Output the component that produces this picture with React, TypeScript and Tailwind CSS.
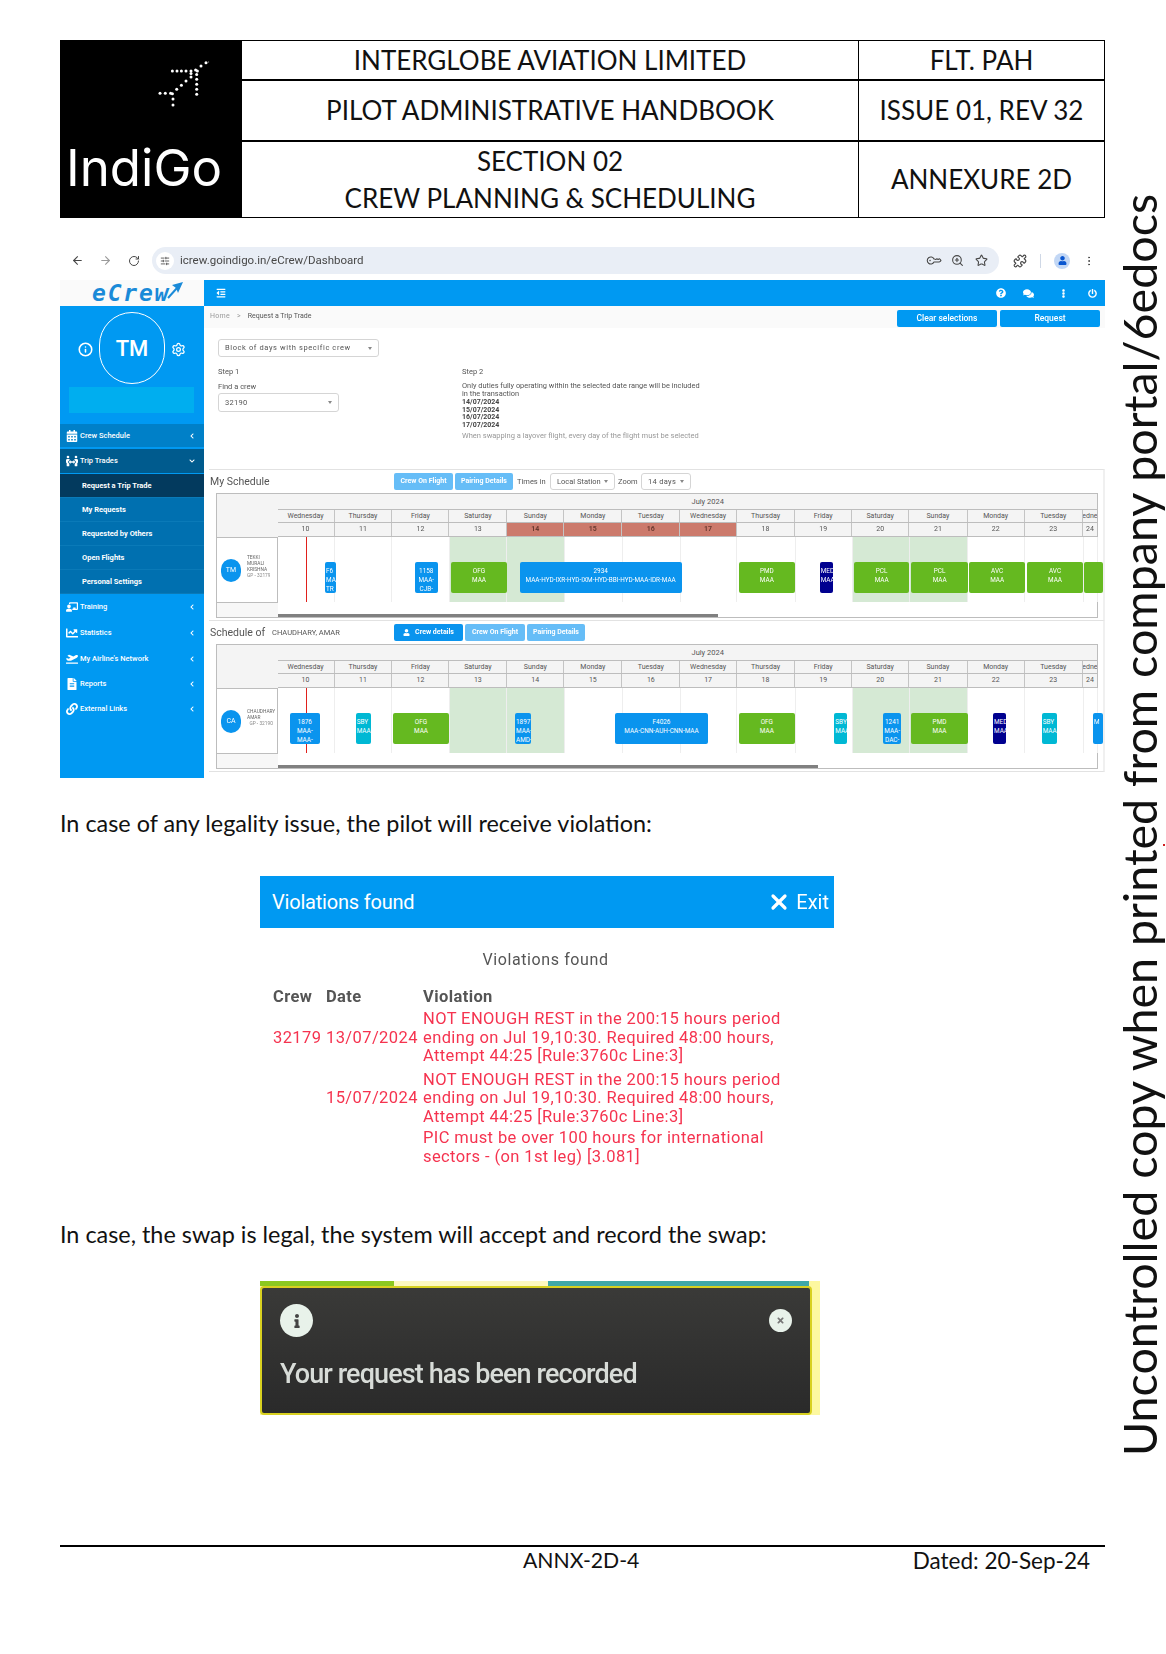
import React from "react";
import { ArrowLeft, ArrowRight, RotateCw, KeyRound, ZoomIn, Star, Puzzle, MoreVertical, Info, Settings, X, SlidersHorizontal } from "lucide-react";
import { FaCalendarAlt, FaPeopleArrows, FaChalkboardTeacher, FaChartLine, FaPlaneDeparture, FaFileAlt, FaLink, FaQuestionCircle, FaComments, FaPowerOff, FaOutdent, FaUser, FaChevronLeft, FaChevronDown, FaEllipsisV, FaInfo, FaTimes } from "react-icons/fa";

const planeDots = [
  [171.4,70],[176,70],[180.4,70],[185,70],[190,70],[196.4,70],
  [205,61.7],[200,65],[194.6,69],[190,72.5],[190,76],[185,80],[180.4,84.3],[175.7,88.3],[171.4,92.7],
  [159,92.3],[164.3,92.3],[169.6,92.3],[172,98],[172,104],
  [195.7,73.5],[195.7,78.3],[195.7,83.3],[195.7,88.3],[195.7,93.3],
];

function Logo() {
  return (
    <div className="bg-black h-full flex flex-col items-start">
      <svg width="180" height="104" viewBox="60 40 180 104" className="block">
        {planeDots.map(([x, y], i) => <circle key={i} cx={x} cy={y} r={1.5} fill="#fff" />)}
        <circle cx="207.5" cy="61" r="0.7" fill="#777" />
      </svg>
      <div className="ml-[5px] mt-[-2px] text-white font-[Inter,sans-serif] font-normal text-[51px] leading-[50px] tracking-[0px]">IndiGo</div>
    </div>
  );
}

function Header() {
  return (
    <div className="grid grid-cols-[180px_617px_1fr] grid-rows-[40px_61px_1fr] h-[178px] border border-black font-[Lato,sans-serif] text-[26px] text-[#111]">
      <div className="row-span-3"><Logo /></div>
      <div className="border-l border-b-2 border-black flex items-center justify-center">INTERGLOBE AVIATION LIMITED</div>
      <div className="border-l border-b-2 border-black flex items-center justify-center">FLT. PAH</div>
      <div className="border-l border-b-2 border-black flex items-center justify-center">PILOT ADMINISTRATIVE HANDBOOK</div>
      <div className="border-l border-b-2 border-black flex items-center justify-center">ISSUE 01, REV 32</div>
      <div className="border-l border-black flex flex-col items-center justify-center leading-[37px]"><span>SECTION 02</span><span>CREW PLANNING &amp; SCHEDULING</span></div>
      <div className="border-l border-black flex items-center justify-center">ANNEXURE 2D</div>
    </div>
  );
}

function BrowserBar() {
  return (
    <div className="h-[27px] flex items-center text-[#474747] font-[Roboto,sans-serif] blur-[0.3px]">
      <ArrowLeft size={13} className="ml-[11px]" />
      <ArrowRight size={13} className="ml-[15px] text-[#9a9a9a]" />
      <RotateCw size={12} className="ml-[16px]" />
      <div className="ml-[12px] w-[847px] h-[27px] rounded-full bg-[#e9eef6] flex items-center">
        <div className="ml-[4px] w-[18px] h-[18px] rounded-full bg-white flex items-center justify-center"><SlidersHorizontal size={10} /></div>
        <span className="ml-[6px] text-[11.5px]">icrew.goindigo.in/eCrew/Dashboard</span>
        <div className="ml-auto flex items-center gap-[11px] mr-[11px]">
          <KeyRound size={13} className="rotate-[225deg]" /><ZoomIn size={13} /><Star size={13} />
        </div>
      </div>
      <Puzzle size={14} className="ml-[14px]" />
      <div className="ml-[13px] w-px h-[14px] bg-[#cfd8e6]" />
      <div className="ml-[13px] w-[16px] h-[16px] rounded-full bg-[#c2d7f5] flex items-center justify-center text-[#0b57d0]"><FaUser size={9} /></div>
      <MoreVertical size={12} className="ml-[13px]" />
    </div>
  );
}

function NavRow({ icon, label, open, cls }: { icon: React.ReactNode; label: string; open?: boolean; cls: string }) {
  return (
    <div className={"flex items-center pl-[5px] pr-[9px] text-white font-medium text-[7.5px] " + cls}>
      <span className="w-[14px] mr-px flex justify-center text-[12px]">{icon}</span>
      <span className="flex-1">{label}</span>
      {open ? <FaChevronDown size={6} /> : <FaChevronLeft size={6} />}
    </div>
  );
}

function SubRow({ label, dark }: { label: string; dark?: boolean }) {
  return <div className={"h-[24px] flex items-center pl-[22px] text-white font-bold text-[7.5px] border-b border-[#0a7ab8] " + (dark ? "bg-[#033a5e]" : "bg-[#0070b0]")}>{label}</div>;
}

function Sidebar() {
  return (
    <div className="w-[144px] flex flex-col shrink-0">
      <div className="h-[26px] bg-[#fafafa] flex items-end pl-[32px]">
        <span className="font-['DejaVu_Sans_Mono',monospace] italic font-bold text-[23px] leading-[26px] text-[#1a8ad8] tracking-[1.8px]">eCrew</span>
        <svg width="18" height="18" viewBox="0 0 18 18" className="ml-[-4px] mb-[7px]">
          <path d="M2 17 L11 7" stroke="#1a8ad8" strokeWidth="2" fill="none" />
          <polygon points="17,1 6,4 10,7 12,12" fill="#1a8ad8" />
        </svg>
      </div>
      <div className="flex-1 bg-[#0099f2] flex flex-col">
        <div className="h-[118px] flex flex-col">
          <div className="flex items-center mt-[6px] h-[72px]">
            <Info size={15} className="text-white ml-[18px] mt-[3px]" strokeWidth={2.5} />
            <div className="ml-[6px] w-[66px] h-[72px] rounded-full border border-white text-white text-[22px] font-medium flex items-center justify-center">TM</div>
            <Settings size={15} className="text-white ml-[6px] mt-[3px]" />
          </div>
          <div className="ml-[9px] mt-[3px] w-[125px] h-[26px] bg-[#00aeef]" />
        </div>
        <NavRow cls="h-[23px] bg-[#0080c8] mb-[2px]" icon={<FaCalendarAlt />} label="Crew Schedule" />
        <NavRow cls="h-[24px] bg-[#005b8e] mb-px" icon={<FaPeopleArrows />} label="Trip Trades" open />
        <SubRow dark label="Request a Trip Trade" />
        <SubRow label="My Requests" />
        <SubRow label="Requested by Others" />
        <SubRow label="Open Flights" />
        <SubRow label="Personal Settings" />
        <NavRow cls="h-[26px]" icon={<FaChalkboardTeacher />} label="Training" />
        <NavRow cls="h-[26px]" icon={<FaChartLine />} label="Statistics" />
        <NavRow cls="h-[25px]" icon={<FaPlaneDeparture />} label="My Airline's Network" />
        <NavRow cls="h-[25px]" icon={<FaFileAlt />} label="Reports" />
        <NavRow cls="h-[26px]" icon={<FaLink />} label="External Links" />
      </div>
    </div>
  );
}

const Caret = () => <span className="ml-auto shrink-0 w-0 h-0 border-x-[2px] border-x-transparent border-t-[3px] border-t-[#888]" />;

function Select({ label, cls }: { label: string; cls: string }) {
  return <div className={"flex items-center whitespace-nowrap border border-[#d5d5d5] rounded-[3px] text-[#555] text-[7.5px] px-[6px] bg-white " + cls}><span>{label}</span><Caret /></div>;
}

const edges = [277.5, 334.6, 392.5, 449.6, 507.5, 564.6, 622.7, 680.7, 737.3, 795.7, 852.7, 909.7, 968.3, 1025.3, 1083.7, 1097.7];
const dayNames = ["Wednesday","Thursday","Friday","Saturday","Sunday","Monday","Tuesday","Wednesday","Thursday","Friday","Saturday","Sunday","Monday","Tuesday","edne"];
const BLUE = "bg-[#0a94ee]";
const GREEN = "bg-[#65b920]";
const NAVY = "bg-[#00008f]";
const TEAL = "bg-[#00b8d4]";

type Block = { a: number; b: number; c: string; t: string[]; left?: boolean };

function Table({ red, avatar, name, gp, blocks, thumb }: { red: boolean; avatar: string; name: string[]; gp: string; blocks: Block[]; thumb: number }) {
  return (
    <div className="ml-[7px] w-[882px] flex text-[#555]">
      <div className="w-[61.5px] shrink-0 flex flex-col border-l border-[#bdbdbd]">
        <div className="h-[44px] bg-[#f4f4f4] border-t border-[#bdbdbd]" />
        <div className="h-[65px] border-t border-r border-[#bdbdbd] bg-white flex items-center">
          <div className="ml-[4px] w-[20px] h-[23px] rounded-full bg-[#0a94ee] text-white text-[7px] flex items-center justify-center shrink-0">{avatar}</div>
          <div className="ml-[6px] text-[4.8px] leading-[6px] whitespace-nowrap overflow-hidden text-[#666] mt-[-6px]">
            {name.map((n) => <div key={n}>{n}</div>)}
            <div className="text-center text-[#888]">{gp}</div>
          </div>
        </div>
        <div className="h-[16px] bg-[#f7f7f7] border-y border-[#bdbdbd]" />
      </div>
      <div className="flex-1 flex flex-col min-w-0">
        <div className="h-[17px] bg-[#f4f4f4] border-y border-r border-[#bdbdbd] flex items-center text-[7.5px] pl-[414px]">July 2024</div>
        <div className="h-[13px] bg-[#f4f4f4] border-b border-r border-[#bdbdbd] flex">
          {dayNames.map((d, i) => (
            <div key={i} className="border-r border-[#c4c4c4] last:border-r-0 flex items-center justify-center overflow-hidden text-[7px] whitespace-nowrap" style={{ width: edges[i + 1] - edges[i] }}>{d}</div>
          ))}
        </div>
        <div className="h-[14px] bg-[#f4f4f4] border-b border-r border-[#bdbdbd] flex">
          {dayNames.map((_, i) => {
            const hot = red && i >= 4 && i <= 7;
            return <div key={i} className={"border-r border-[#c4c4c4] last:border-r-0 flex items-center justify-center text-[7px] " + (hot ? "bg-[#cc7a6c] font-bold text-[#6b3a30]" : "")} style={{ width: edges[i + 1] - edges[i] }}>{10 + i}</div>;
          })}
        </div>
        <div className="h-[65px] relative flex bg-white">
          {dayNames.map((_, i) => {
            const green = i === 3 || i === 4 || i === 10 || i === 11;
            return <div key={i} className={"border-r border-[#eeeeee] h-full " + (green ? "bg-[#d5e9d4]" : "")} style={{ width: edges[i + 1] - edges[i] }} />;
          })}
          <div className="absolute top-0 bottom-0 left-[28px] w-px bg-[#e0201c]" />
          {blocks.map((b, i) => (
            <div key={i} className={"absolute top-[24.5px] h-[31px] rounded-[2px] text-white text-[6.4px] leading-[9px] pt-[5px] overflow-hidden whitespace-nowrap " + (b.left ? "text-left pl-px " : "text-center ") + b.c} style={{ left: b.a - 277.5, width: b.b - b.a }}>
              {b.t.map((l, j) => <div key={j}>{l}</div>)}
            </div>
          ))}
        </div>
        <div className="h-[16px] flex flex-col justify-end border-b border-[#bdbdbd] border-r relative">
          <div className="h-[3px] bg-[#808080]" style={{ width: thumb - 277.5 }} />
        </div>
      </div>
    </div>
  );
}

const BlueBtn = ({ label, cls, icon }: { label: string; cls: string; icon?: React.ReactNode }) => (
  <div className={"h-[17px] rounded-[2px] flex items-center justify-center text-white font-bold text-[7px] " + cls}>{icon}{label}</div>
);

const blocks1: Block[] = [
  { a: 325, b: 335.7, c: BLUE, t: ["F6", "MA", "TR"], left: true },
  { a: 415, b: 437.5, c: BLUE, t: ["1158", "MAA-", "CJB-"] },
  { a: 451, b: 507, c: GREEN, t: ["OFG", "MAA"] },
  { a: 519.6, b: 681.7, c: BLUE, t: ["2934", "MAA-HYD-IXR-HYD-IXM-HYD-BBI-HYD-MAA-IDR-MAA"] },
  { a: 738.7, b: 795, c: GREEN, t: ["PMD", "MAA"] },
  { a: 819.7, b: 833.3, c: NAVY, t: ["MED", "MAA"], left: true },
  { a: 854, b: 909.3, c: GREEN, t: ["PCL", "MAA"] },
  { a: 911, b: 968.3, c: GREEN, t: ["PCL", "MAA"] },
  { a: 969, b: 1025.3, c: GREEN, t: ["AVC", "MAA"] },
  { a: 1027, b: 1083, c: GREEN, t: ["AVC", "MAA"] },
  { a: 1084, b: 1102.7, c: GREEN, t: [] },
];
const blocks2: Block[] = [
  { a: 289.6, b: 320, c: BLUE, t: ["1876", "MAA-", "MAA-"] },
  { a: 355.7, b: 370.7, c: TEAL, t: ["SBY", "MAA"], left: true },
  { a: 393, b: 449, c: GREEN, t: ["OFG", "MAA"] },
  { a: 515, b: 531, c: BLUE, t: ["1897", "MAA-", "AMD-"], left: true },
  { a: 614.7, b: 708.3, c: BLUE, t: ["F4026", "MAA-CNN-AUH-CNN-MAA"] },
  { a: 738.7, b: 795, c: GREEN, t: ["OFG", "MAA"] },
  { a: 834.3, b: 847.3, c: TEAL, t: ["SBY", "MAA"], left: true },
  { a: 883.3, b: 901, c: BLUE, t: ["1241", "MAA-", "DAC-"] },
  { a: 911, b: 968, c: GREEN, t: ["PMD", "MAA"] },
  { a: 993, b: 1006.3, c: NAVY, t: ["MED", "MAA"], left: true },
  { a: 1041.7, b: 1057.3, c: TEAL, t: ["SBY", "MAA"], left: true },
  { a: 1093, b: 1102.7, c: BLUE, t: ["", "M"], left: true },
];

function AppShot() {
  return (
    <div className="mt-[6px] h-[498px] flex font-[Roboto,sans-serif] blur-[0.3px]">
      <Sidebar />
      <div className="flex-1 flex flex-col min-w-0">
        <div className="h-[26px] bg-[#0099f2] flex items-center text-white text-[11px]">
          <FaOutdent size={10} className="ml-[12px]" />
          <FaQuestionCircle size={10} className="ml-auto" />
          <FaComments size={11} className="ml-[17px]" />
          <FaEllipsisV size={9} className="ml-[25px]" />
          <FaPowerOff size={9} className="ml-[20px] mr-[8px]" />
        </div>
        <div className="h-[22px] bg-[#fafafa] flex items-center text-[7px] text-[#555] pl-[6px]">
          <span className="text-[#999] tracking-[0.3px] mt-[-2px]">Home</span>
          <span className="mx-[7px] text-[#999] mt-[-2px]">&gt;</span>
          <span className="mt-[-2px]">Request a Trip Trade</span>
          <BlueBtn label="Clear selections" cls="ml-auto w-[100px] bg-[#0099f2] font-medium text-[8.5px] mt-[2px]" />
          <BlueBtn label="Request" cls="ml-[3px] mr-[5px] w-[100px] bg-[#0099f2] font-medium text-[8.5px] mt-[2px]" />
        </div>
        <div className="h-[141px] flex text-[#555] text-[7.5px]">
          <div className="w-[258px] pl-[14px] pt-[11px]">
            <Select label="Block of days with specific crew" cls="w-[161px] h-[18px] tracking-[0.6px]" />
            <div className="mt-[10px] leading-[10px]">Step 1</div>
            <div className="mt-[5px] leading-[10px]">Find a crew</div>
            <Select label="32190" cls="mt-[1px] w-[121px] h-[19px] tracking-[0.3px]" />
          </div>
          <div className="pt-[39px] flex-1">
            <div className="leading-[10px]">Step 2</div>
            <div className="mt-[5px] leading-[8px] w-[242px] text-[7.4px]">Only duties fully operating within the selected date range will be included in the transaction</div>
            <div className="mt-[1px] font-bold text-[7px] text-[#444] leading-[7.6px]"><div>14/07/2024</div><div>15/07/2024</div><div>16/07/2024</div><div>17/07/2024</div></div>
            <div className="mt-[2px] text-[#999] leading-[10px]">When swapping a layover flight, every day of the flight must be selected</div>
          </div>
        </div>
        <div className="ml-[5px] w-[896px] border-t border-r-2 border-t-[#e2e2e2] border-r-[#f0f0f0] h-[152px] flex flex-col border-b border-b-[#e2e2e2]">
          <div className="h-[23px] shrink-0 flex items-center text-[7.5px] text-[#555]">
            <span className="ml-[1px] w-[184px] text-[10.5px]">My Schedule</span>
            <BlueBtn label="Crew On Flight" cls="w-[59px] bg-[#66bdf7]" />
            <BlueBtn label="Pairing Details" cls="ml-[2px] w-[58px] bg-[#66bdf7]" />
            <span className="ml-[4px] w-[33px]">Times in</span>
            <Select label="Local Station" cls="w-[65px] h-[17px]" />
            <span className="ml-[3px] w-[23px]">Zoom</span>
            <Select label="14 days" cls="w-[50px] h-[17px] tracking-[0.3px]" />
          </div>
          <Table red avatar="TM" name={["TEKKI", "MURALI", "KRISHNA"]} gp="GP - 32179" blocks={blocks1} thumb={718.3} />
        </div>
        <div className="ml-[5px] w-[896px] h-[151px] flex flex-col border-r-2 border-r-[#f0f0f0] border-b border-b-[#e2e2e2]">
          <div className="h-[23px] shrink-0 flex items-center text-[7.5px] text-[#555]">
            <span className="ml-[1px] w-[62px] text-[10.5px]">Schedule of</span>
            <span className="w-[122px] text-[7.5px]">CHAUDHARY, AMAR</span>
            <BlueBtn label="Crew details" icon={<FaUser size={7} className="mr-[5px]" />} cls="w-[69px] bg-[#0a94ee]" />
            <BlueBtn label="Crew On Flight" cls="ml-[2px] w-[60px] bg-[#66bdf7]" />
            <BlueBtn label="Pairing Details" cls="ml-[2px] w-[58px] bg-[#66bdf7]" />
          </div>
          <Table red={false} avatar="CA" name={["CHAUDHARY", "AMAR"]} gp="GP - 32190" blocks={blocks2} thumb={817.7} />
        </div>
      </div>
    </div>
  );
}

function Violations() {
  const red = "text-[#f5334f]";
  const text = ["NOT ENOUGH REST in the 200:15 hours period", "ending on Jul 19,10:30. Required 48:00 hours,", "Attempt 44:25 [Rule:3760c Line:3]"];
  const Cell = ({ lines }: { lines: string[] }) => <div className="flex-1">{lines.map((l) => <div key={l}>{l}</div>)}</div>;
  return (
    <div className="ml-[200px] mt-[38px] w-[574px] h-[292px] font-[Roboto,sans-serif] blur-[0.5px]">
      <div className="h-[52px] bg-[#0099f2] flex items-center text-white text-[20px] pl-[12px]">
        <span className="tracking-[-0.2px]">Violations found</span>
        <X size={24} strokeWidth={3.2} className="ml-auto" />
        <span className="ml-[5px] mr-[5px]">Exit</span>
      </div>
      <div className="mt-[22px] h-[20px] leading-[20px] text-center text-[16px] text-[#555] pr-[3px] tracking-[0.6px]">Violations found</div>
      <div className="mt-[18px] pl-[13px] text-[16.5px] leading-[18.5px]">
        <div className="flex font-bold text-[#555] h-[19px] tracking-[0.4px]">
          <span className="w-[53px]">Crew</span><span className="w-[97px]">Date</span><span>Violation</span>
        </div>
        <div className={"flex items-center mt-[3px] tracking-[0.4px] " + red}>
          <span className="w-[53px]">32179</span><span className="w-[97px]">13/07/2024</span><Cell lines={text} />
        </div>
        <div className={"flex items-center mt-[5px] tracking-[0.4px] " + red}>
          <span className="w-[53px]" /><span className="w-[97px]">15/07/2024</span><Cell lines={text} />
        </div>
        <div className={"flex items-center mt-[3px] tracking-[0.4px] " + red}>
          <span className="w-[150px]" /><Cell lines={["PIC must be over 100 hours for international", "sectors - (on 1st leg) [3.081]"]} />
        </div>
      </div>
    </div>
  );
}

function Toast() {
  return (
    <div className="ml-[200px] mt-[32px] w-[560px] font-[Roboto,sans-serif] bg-[#fdf8a0] blur-[0.6px]">
      <div className="h-[5px] flex w-[549px]">
        <div className="w-[134px] bg-[#8cc820]" />
        <div className="w-[154px] bg-[#fdf8c0]" />
        <div className="flex-1 bg-[#3fa8a8]" />
      </div>
      <div className="w-[552px] h-[129px] bg-gradient-to-b from-[#3a3a38] to-[#2a2a2a] border-2 border-[#d8d020] rounded-[4px] pl-[18px] pt-[16px] flex flex-col">
        <div className="flex items-center">
          <div className="w-[33px] h-[33px] rounded-full bg-[#e8f2ea] flex items-center justify-center text-[#444]"><FaInfo size={14} /></div>
          <div className="ml-auto mr-[18px] w-[23px] h-[23px] rounded-full bg-[#e8f2ea] flex items-center justify-center text-[#777]"><FaTimes size={9} /></div>
        </div>
        <div className="mt-[20px] text-[27px] font-medium text-[#d8dcd8] tracking-[-0.9px] leading-[34px]">Your request has been recorded</div>
      </div>
    </div>
  );
}

export default function App() {
  return (
    <div className="relative w-[1166px] h-[1654px] bg-white overflow-hidden">
      <div className="pt-[40px] pl-[60px] w-[1105px] flex flex-col">
        <Header />
        <div className="mt-[29px]"><BrowserBar /></div>
        <AppShot />
        <div className="mt-[30px] h-[30px] leading-[30px] font-[Lato,sans-serif] text-[23.4px] text-[#111]">In case of any legality issue, the pilot will receive violation:</div>
        <Violations />
        <div className="mt-[51px] h-[30px] leading-[30px] font-[Lato,sans-serif] text-[23.4px] text-[#111]">In case, the swap is legal, the system will accept and record the swap:</div>
        <Toast />
        <div className="mt-[130px] border-t-2 border-black h-[30px] flex items-center font-[Lato,sans-serif] text-[#111]">
          <span className="ml-[463px] text-[21.2px]">ANNX-2D-4</span>
          <span className="ml-auto mr-[15px] text-[22.5px]">Dated: 20-Sep-24</span>
        </div>
      </div>
      <div className="absolute left-[1112px] top-[190px] h-[1270px] w-[54px] flex items-center justify-center [writing-mode:vertical-rl] rotate-180 font-[Lato,sans-serif] text-[46.6px] leading-[54px] text-[#111] whitespace-nowrap">Uncontrolled copy when printed from company portal/6edocs</div>
      <div className="absolute left-[1163px] top-[844px] w-[2px] h-[2px] bg-[#d02020]" />
    </div>
  );
}
